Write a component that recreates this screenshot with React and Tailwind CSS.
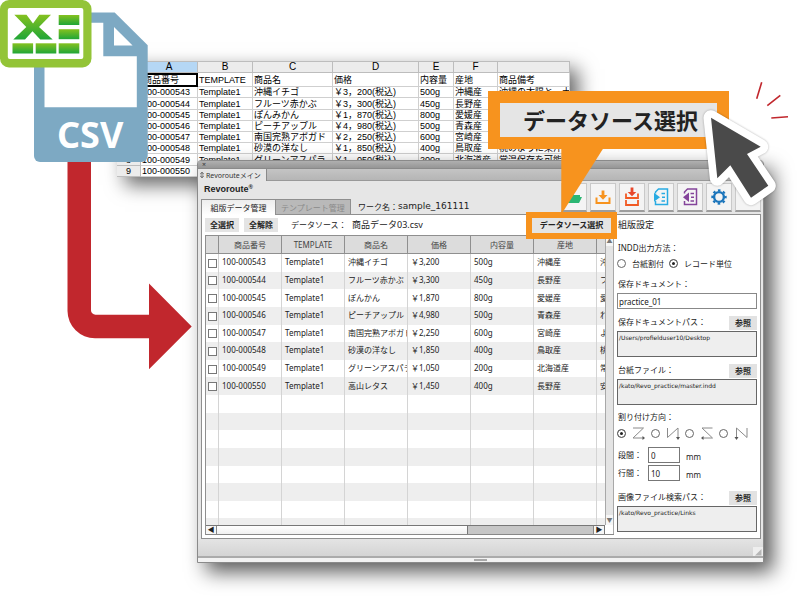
import clsx from 'clsx'

const products = [
  { code: '100-000543', name: '沖縄イチゴ', price: '3,200', sheetPrice: '￥3，200(税込)', amount: '500g', origin: '沖縄産', note: '沖縄の太陽と、土' },
  { code: '100-000544', name: 'フルーツ赤かぶ', price: '3,300', sheetPrice: '￥3，300(税込)', amount: '450g', origin: '長野産', note: 'フルーツ' },
  { code: '100-000545', name: 'ぽんかん', sheetName: 'ぽんみかん', price: '1,870', sheetPrice: '￥1，870(税込)', amount: '800g', origin: '愛媛産', note: '愛媛の定番' },
  { code: '100-000546', name: 'ピーチアップル', price: '4,980', sheetPrice: '￥4，980(税込)', amount: '500g', origin: '青森産', note: 'れっきとした' },
  { code: '100-000547', name: '南国完熟アボガド', price: '2,250', sheetPrice: '￥2，250(税込)', amount: '600g', origin: '宮崎産', note: 'よく熟した' },
  { code: '100-000548', name: '砂漠の洋なし', price: '1,850', sheetPrice: '￥1，850(税込)', amount: '400g', origin: '鳥取産', note: '桃のように果汁' },
  { code: '100-000549', name: 'グリーンアスパラ', price: '1,050', sheetPrice: '￥1，050(税込)', amount: '200g', origin: '北海道産', note: '常温保存を可能' },
  { code: '100-000550', name: '高山レタス', price: '1,450', sheetPrice: '￥1，450(税込)', amount: '400g', origin: '長野産', note: '安心のレタス' },
]

const emptyRows = [1, 2, 3, 4, 5, 6, 7, 8]

function Spreadsheet() {
  const cell = 'overflow-hidden border-r border-b border-[#cfcfcf] p-0 pl-px text-left font-normal'
  const head = 'border-r border-b border-[#bdbdbd] p-0 font-normal'
  const rowNumber = 'border-r border-b border-[#bdbdbd] bg-[#ececec] p-0 text-center'
  return (
    <div className="absolute top-[61px] right-[230px] left-[117px] bg-white shadow-[8px_8px_18px_rgba(0,0,0,0.6)]">
      <table className="h-[116px] w-full table-fixed border-separate border-spacing-0 border-t border-[#bdbdbd] font-['Liberation_Sans','Noto_Sans_CJK_JP',sans-serif] text-[9px] leading-[10px] whitespace-nowrap text-black">
        <colgroup>
          <col className="w-6" />
          <col className="w-[57px]" />
          <col className="w-[55px]" />
          <col className="w-20" />
          <col className="w-[86px]" />
          <col className="w-[35px]" />
          <col className="w-11" />
          <col />
        </colgroup>
        <thead className="bg-[#ececec] text-[10px]">
          <tr>
            <th className={head} />
            <th className={clsx(head, 'bg-[#b5d7f5]')}>A</th>
            <th className={head}>B</th>
            <th className={head}>C</th>
            <th className={head}>D</th>
            <th className={head}>E</th>
            <th className={head}>F</th>
            <th className={head} />
          </tr>
        </thead>
        <tbody>
          <tr>
            <td className={rowNumber}>1</td>
            <td className="border-2 border-black p-0">商品番号</td>
            <td className={cell}>TEMPLATE</td>
            <td className={cell}>商品名</td>
            <td className={cell}>価格</td>
            <td className={cell}>内容量</td>
            <td className={cell}>産地</td>
            <td className={cell}>商品備考</td>
          </tr>
          {products.map((p, i) => (
            <tr key={p.code}>
              <td className={rowNumber}>{i + 2}</td>
              <td className={cell}>{p.code}</td>
              <td className={cell}>Template1</td>
              <td className={cell}>{p.sheetName || p.name}</td>
              <td className={cell}>{p.sheetPrice}</td>
              <td className={cell}>{p.amount}</td>
              <td className={cell}>{p.origin}</td>
              <td className={cell}>{p.note}</td>
            </tr>
          ))}
        </tbody>
      </table>
    </div>
  )
}

function CsvFile() {
  return (
    <div className="absolute top-0 left-0 h-[162px] w-[148px]">
      <svg className="absolute inset-0" width="148" height="162" viewBox="0 0 148 162" aria-hidden="true">
        <defs>
          <linearGradient id="leaf" x1="0" y1="0" x2="0" y2="1">
            <stop offset="0" stopColor="#85c11f" />
            <stop offset="1" stopColor="#1fa637" />
          </linearGradient>
        </defs>
        <path d="M34 12.500H114.700L147.700 45.200V156A6 6 0 0 1 141.700 162H40A6 6 0 0 1 34 156Z" fill="#7da9c3" />
        <path d="M44.500 22.700H103.300V56.300H136.800V107.300H44.500Z" fill="#fff" />
        <path d="M114 27V45.400H132.600Z" fill="#fff" />
        <rect x="0" y="0" width="91.500" height="67.500" rx="9" fill="#93c437" />
        <rect x="7.800" y="8" width="75.500" height="51" rx="2" fill="#fff" />
        <path d="M14.300 14.700H26.500L33 23.500L39.300 14.700H51L39 27L52.700 39.500H40.300L32.500 31.300L25 39.500H13.300L26.300 27Z" fill="url(#leaf)" />
        <rect x="58.700" y="15" width="20.600" height="10" fill="url(#leaf)" />
        <rect x="58.700" y="29.200" width="20.600" height="10" fill="url(#leaf)" />
        <rect x="12.500" y="43.300" width="20.600" height="10.200" fill="url(#leaf)" />
        <rect x="35.700" y="43.300" width="20.600" height="10.200" fill="url(#leaf)" />
        <rect x="58.700" y="43.300" width="20.600" height="10.200" fill="url(#leaf)" />
      </svg>
      <span className="absolute bottom-2 left-[57px] font-['Noto_Sans',sans-serif] text-[36px] leading-[38px] font-bold text-white">CSV</span>
    </div>
  )
}

function RedArrow() {
  return (
    <svg className="absolute top-[150px] left-[60px]" width="140" height="230" viewBox="60 150 140 230" aria-hidden="true">
      <path d="M67.500 150V311A27.500 27.500 0 0 0 95 338.300H149V369.300L191.700 326.500L149 283.500V314.700H95.500A4.500 4.500 0 0 1 91 310V150Z" fill="#c1272d" />
    </svg>
  )
}

function ToolButton({ label, children }) {
  return (
    <button
      type="button"
      aria-label={label}
      className="flex h-[29px] w-[26px] items-center justify-center border border-b-2 border-[#c9c9c9] border-b-[#9d9d9d] bg-[#f4f4f4]"
    >
      <svg width="20" height="20" viewBox="0 0 20 20" fill="none" aria-hidden="true">
        {children}
      </svg>
    </button>
  )
}

function DocIcon({ color, flip }) {
  return (
    <>
      <path d="M4.500 6.500V5L7.500 2H16.500V17.500H4.500V14" stroke={color} strokeWidth="1.500" />
      {flip
        ? <path d="M9 5.500V15L3 10.200Z" fill={color} />
        : <path d="M3 5.800V14.800L9 10.300Z" fill={color} />}
      <path d="M10.500 6.500H14M11 10.300H14M10.500 14H14" stroke={color} strokeWidth="1.500" />
    </>
  )
}

function Toolbar() {
  return (
    <div className="flex gap-[3px]">
      <ToolButton label="開く">
        <path d="M3 16V6H8L10 8H16V10H18L15 16Z" fill="#2bb673" />
      </ToolButton>
      <ToolButton label="保存">
        <path d="M3.500 10.500V16H16.500V10.500" stroke="#f7931e" strokeWidth="2" />
        <path d="M8.600 3.500H11.400V8H14.500L10 12.800L5.500 8H8.600Z" fill="#f7931e" />
      </ToolButton>
      <ToolButton label="別名で保存">
        <path d="M4 6.500V11H16V6.500M4 13V18H16V13" stroke="#f15a24" strokeWidth="1.800" />
        <path d="M8.600 0.500H11.400V5H14.300L10 9.300L5.700 5H8.600Z" fill="#e8472b" />
      </ToolButton>
      <ToolButton label="読み込み">
        <DocIcon color="#29abe2" />
      </ToolButton>
      <ToolButton label="書き出し">
        <DocIcon color="#84449a" flip />
      </ToolButton>
      <ToolButton label="環境設定">
        <circle cx="10" cy="10" r="4.900" stroke="#1b75bb" strokeWidth="2.400" />
        <circle cx="10" cy="10" r="6.700" stroke="#1b75bb" strokeWidth="2" strokeDasharray="2.600 2.662" strokeDashoffset="1.300" />
      </ToolButton>
      <ToolButton label="その他" />
    </div>
  )
}

function ProductTable() {
  const th = 'border-r border-b border-[#8f8f8f] p-0 text-center font-normal'
  const td = 'overflow-hidden border-r border-[#d4d4d4] p-0 pb-0.5 pl-[3px] text-left'
  return (
    <div className="border-t border-l border-[#8f8f8f]">
      <div className="flex h-[289px]">
        <div className="min-w-0 flex-1 overflow-hidden">
          <table className="h-[300px] w-full table-fixed border-separate border-spacing-0 text-[8px] leading-[11px] whitespace-nowrap text-[#222]">
            <colgroup>
              <col className="w-[13px]" />
              <col className="w-[63px]" />
              <col className="w-[63px]" />
              <col className="w-[63px]" />
              <col className="w-[63px]" />
              <col className="w-[63px]" />
              <col className="w-[63px]" />
              <col />
            </colgroup>
            <thead className="bg-[#dcdcdc] text-[#444]">
              <tr className="h-[18px]">
                <th className={th} />
                <th className={th}>商品番号</th>
                <th className={th}>TEMPLATE</th>
                <th className={th}>商品名</th>
                <th className={th}>価格</th>
                <th className={th}>内容量</th>
                <th className={th}>産地</th>
                <th className="border-b border-[#8f8f8f] p-0" />
              </tr>
            </thead>
            <tbody>
              {products.map((p) => (
                <tr key={p.code} className="even:bg-[#eeeeee]">
                  <td className="border-r border-[#d4d4d4] p-0">
                    <input
                      type="checkbox"
                      aria-label={p.code}
                      className="mx-auto mt-px block size-[9px] appearance-none border border-[#777] bg-white"
                    />
                  </td>
                  <td className={td}>{p.code}</td>
                  <td className={td}>Template1</td>
                  <td className={td}>{p.name}</td>
                  <td className={td}>￥{p.price}</td>
                  <td className={td}>{p.amount}</td>
                  <td className={td}>{p.origin}</td>
                  <td className="overflow-hidden p-0 pb-0.5 pl-[3px]">{p.note[0]}</td>
                </tr>
              ))}
              {emptyRows.map((n) => (
                <tr key={n} className="even:bg-[#eeeeee]">
                  <td className={td}>&nbsp;</td>
                  <td className={td} />
                  <td className={td} />
                  <td className={td} />
                  <td className={td} />
                  <td className={td} />
                  <td className={td} />
                  <td />
                </tr>
              ))}
            </tbody>
          </table>
        </div>
        <div className="flex w-[9px] flex-col justify-between border-x border-[#a8a8a8] bg-[#e4e4e4] text-center text-[6px] leading-[10px] text-[#777]">
          <span className="bg-[#f6f6f6]">▲</span>
          <span className="bg-[#f6f6f6]">▼</span>
        </div>
      </div>
      <div className="flex h-[10px] border-b border-[#888]">
        <div className="flex min-w-0 flex-1 border-t border-r border-[#777] text-center text-[7px] leading-[8px] text-[#222]">
          <span className="w-[11px] border-r border-[#888] bg-[#f6f6f6]">◀</span>
          <span className="flex-2 border-r border-[#777] bg-linear-to-b from-white to-[#f0f0f0]" />
          <span className="flex-1 bg-[#c6c6c6]" />
          <span className="w-[11px] border-l border-[#888] bg-[#f6f6f6]">▶</span>
        </div>
        <div className="w-[9px] border-r border-[#a8a8a8]" />
      </div>
    </div>
  )
}

function Radio({ id, name, checked, label }) {
  return (
    <input
      id={id}
      type="radio"
      name={name}
      aria-label={label}
      defaultChecked={checked}
      className="size-[9px] shrink-0 appearance-none rounded-full border border-[#666] bg-white checked:bg-[#222] checked:shadow-[inset_0_0_0_2px_#fff]"
    />
  )
}

function PathField({ id, label, value, className }) {
  return (
    <div className={className}>
      <div className="flex h-[15px] items-end justify-between">
        <label htmlFor={id} className="pl-px leading-[17px]">{label}</label>
        <button type="button" className="h-[14px] w-7 bg-[#e2e2e2] text-center leading-[14px] font-bold">参照</button>
      </div>
      <textarea
        id={id}
        defaultValue={value}
        className="mt-px block h-[26px] w-full resize-none overflow-hidden border border-[#666] bg-[#eeeeee] px-px py-0.5 font-['DejaVu_Sans',sans-serif] text-[6px] leading-[8px]"
      />
    </div>
  )
}

const directions = [
  { label: '横 Z 方向', line: 'M1 3H11.500L1 13H12', head: 'M10.500 11L13 13L10.500 15Z' },
  { label: '縦 N 方向', line: 'M1.500 3V12.500L12 3V13', head: 'M10 12L12 15L14 12Z' },
  { label: '横 逆Z 方向', line: 'M12.500 3H2L12.500 13H2', head: 'M3.500 11L1 13L3.500 15Z' },
  { label: '縦 逆N 方向', line: 'M13 3V12.500L2.500 3V13', head: 'M0.500 12L2.500 15L4.500 12Z' },
]

function SettingsPanel() {
  return (
    <div className="w-[147px] shrink-0 border-t border-r border-[#8f8f8f] bg-white pr-[3px] pb-1.5 pl-[3px] text-[8px] text-[#222]">
      <h2 className="pl-px text-[9px] leading-[20px]">組版設定</h2>
      <p className="mt-[5px] pl-px leading-[16px]">INDD出力方法：</p>
      <div className="flex h-[15px] items-center">
        <Radio id="unit-sheet" name="unit" />
        <label htmlFor="unit-sheet" className="mr-[5px] ml-1.5">台紙割付</label>
        <Radio id="unit-record" name="unit" checked />
        <label htmlFor="unit-record" className="ml-1.5">レコード単位</label>
      </div>
      <label htmlFor="doc" className="mt-1.5 block pl-px leading-[14px]">保存ドキュメント：</label>
      <input id="doc" defaultValue="practice_01" className="mt-0.5 block h-4 w-full border border-[#888] bg-white px-px" />
      <PathField id="doc-path" className="mt-1.5" label="保存ドキュメントパス：" value="/Users/profielduser10/Desktop" />
      <PathField id="base-file" className="mt-1.5" label="台紙ファイル：" value="/kato/Revo_practice/master.indd" />
      <p className="mt-[5px] pl-px leading-[14px]">割り付け方向：</p>
      <div className="flex h-[18px] items-center">
        {directions.map((d, i) => (
          <span key={d.label} className="flex w-[34px] items-center gap-1.5">
            <Radio name="direction" label={d.label} checked={i === 0} />
            <svg width="14" height="16" viewBox="0 0 14 16" fill="none" aria-hidden="true">
              <path d={d.line} stroke="#8a8a8a" />
              <path d={d.head} fill="#555" />
            </svg>
          </span>
        ))}
      </div>
      <div className="mt-[5px] flex h-4 items-center">
        <label htmlFor="col-gap" className="w-[31px] shrink-0 pl-px">段間：</label>
        <input id="col-gap" defaultValue="0" className="h-4 w-8 border border-[#777] px-0.5" />
        <span className="pt-1 pl-1.5">mm</span>
      </div>
      <div className="mt-0.5 flex h-4 items-center">
        <label htmlFor="row-gap" className="w-[31px] shrink-0 pl-px">行間：</label>
        <input id="row-gap" defaultValue="10" className="h-4 w-8 border border-[#777] px-0.5" />
        <span className="pt-1 pl-1.5">mm</span>
      </div>
      <PathField id="image-path" className="mt-[9px]" label="画像ファイル検索パス：" value="/kato/Revo_practice/Links" />
    </div>
  )
}

function MainWindow() {
  return (
    <main className="relative mr-9 ml-[197px] rounded-t-sm border border-[#8a8a8a] bg-[#e6e6e6] shadow-[9px_9px_20px_rgba(0,0,0,0.65)]">
      <div className="flex h-[8px] items-center border-b border-[#8a8a8a] bg-linear-to-b from-[#b0b0b0] to-[#969696] pl-1 text-[7px] leading-[7px] text-[#333]">×</div>
      <div className="flex h-[12px] bg-linear-to-b from-[#c4c4c4] to-[#b4b4b4]">
        <div className="flex w-[69px] items-center gap-0.5 border-r border-[#8a8a8a] bg-[#e6e6e6] pl-0.5 text-[7px] leading-[11px] whitespace-nowrap text-[#333]">
          <svg width="4" height="8" viewBox="0 0 4 8" fill="none" stroke="#555" strokeWidth="0.800" aria-hidden="true">
            <path d="M0.500 3L2 1L3.500 3ZM0.500 5L2 7L3.500 5Z" />
          </svg>
          Revorouteメイン
        </div>
        <div className="flex-1 border-b border-[#999]" />
      </div>

      <div className="flex h-[33px] justify-between pr-0.5 pl-[3px]">
        <div className="flex flex-col justify-between">
          <h1 className="pt-0.5 pl-[3px] font-['Liberation_Sans',sans-serif] text-[9px] leading-[12px] font-bold text-[#222]">
            Revoroute<sup className="text-[6px] leading-[6px]">®</sup>
          </h1>
          <div className="relative z-10 -mb-px flex h-4 text-[8px] leading-[15px] whitespace-nowrap text-[#222]">
            <button type="button" className="w-[75px] border border-b-0 border-[#8f8f8f] bg-linear-to-b from-[#ededed] to-white">組版データ管理</button>
            <button type="button" className="w-[75px] border border-l-0 border-[#8f8f8f] bg-[#b9b9b9] text-[#8a8a8a]">テンプレート管理</button>
            <span className="pl-[7px]">ワーク名：</span>
            <span className="font-['DejaVu_Sans',sans-serif] text-[9px]">sample_161111</span>
          </div>
        </div>
        <div className="pt-0.5">
          <Toolbar />
        </div>
      </div>

      <div className="flex pr-0.5 pl-[3px]">
        <section className="min-w-0 flex-1 border-t border-b border-l border-[#8f8f8f] bg-white pt-[3px] pb-[3px] pl-[3px]">
          <div className="mb-[3px] flex h-[14px] items-center text-[8px] leading-[14px] whitespace-nowrap text-[#222]">
            <button type="button" className="w-[34px] bg-[#e4e4e4] font-bold">全選択</button>
            <button type="button" className="ml-[5px] w-[34px] bg-[#e4e4e4] font-bold">全解除</button>
            <span className="ml-[13px] w-[61px]">データソース：</span>
            <span className="text-[9px]">商品データ03.csv</span>
            <button type="button" className="relative z-20 mr-[3px] ml-auto h-[15px] w-[79px] bg-[#e4e4e4] font-bold ring-[6px] ring-[#f7931e]">データソース選択</button>
          </div>
          <ProductTable />
        </section>
        <div className="flex border-b border-[#8f8f8f]">
          <SettingsPanel />
        </div>
      </div>

      <div className="flex h-[19px] items-end justify-end border-b-2 border-[#ababab] bg-linear-to-b from-[#e4e4e4] to-[#d4d4d4]">
        <svg width="10" height="9" viewBox="0 0 10 9" aria-hidden="true">
          <rect width="10" height="9" fill="#eee" />
          <path d="M2 8.500L8.500 2V8.500Z" fill="#b5b5b5" />
        </svg>
      </div>
      <div className="flex h-1 items-center justify-center bg-[#f2f2f2]">
        <span className="h-0.5 w-[13px] bg-[#a8a8a8]" />
      </div>
    </main>
  )
}

function Callout() {
  return (
    <>
      <svg className="absolute top-[148px] right-[196px] z-30" width="44" height="66" viewBox="560 148 44 66" aria-hidden="true">
        <path d="M561.300 148H603.500L562.500 212.500H561.300Z" fill="#f7931e" />
      </svg>
      <div className="absolute top-[91px] right-[71px] z-30 flex h-[58px] w-[241px] items-center justify-center border-12 border-[#f7931e] bg-[#e5e5e5] pl-1 text-[22px] leading-[34px] font-bold whitespace-nowrap text-[#222]">
        データソース選択
      </div>
    </>
  )
}

function Cursor() {
  return (
    <svg className="absolute top-[70px] right-0 z-40" width="110" height="150" viewBox="690 70 110 150" aria-hidden="true">
      <path
        d="M711 117.700L760.700 146.700L747 154L768.300 185.700L751 197.700L730.300 165.300L717.300 178.300Z"
        fill="#fff"
        stroke="#fff"
        strokeWidth="15"
        strokeLinejoin="round"
        className="drop-shadow-[0_0_1px_rgba(0,0,0,0.3)]"
      />
      <path d="M711 117.700L760.700 146.700L747 154L768.300 185.700L751 197.700L730.300 165.300L717.300 178.300Z" fill="#4a4a4a" />
      <path d="M761.700 82.300L756.700 98.700M780.300 95.300L767.300 105.700M771.300 118L788 116.700" stroke="#c1272d" strokeWidth="1.600" />
    </svg>
  )
}

export default function App() {
  return (
    <div className="relative min-h-screen overflow-hidden bg-white pt-40 pb-9 font-['Noto_Sans','Noto_Sans_CJK_JP',sans-serif]" lang="ja">
      <Spreadsheet />
      <RedArrow />
      <CsvFile />
      <MainWindow />
      <Callout />
      <Cursor />
    </div>
  )
}
